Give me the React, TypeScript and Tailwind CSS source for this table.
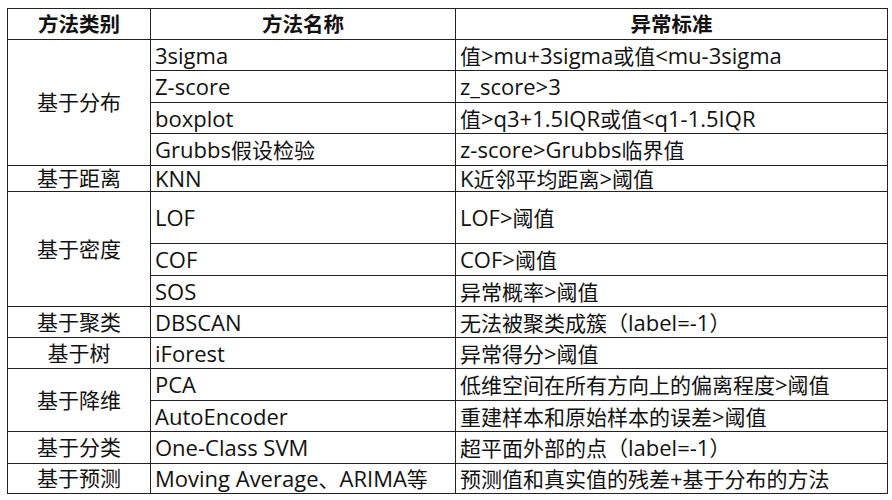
type Group = { category: string; rows: [string, string][] };

const groups: Group[] = [
  {
    category: "基于分布",
    rows: [
      ["3sigma", "值>mu+3sigma或值<mu-3sigma"],
      ["Z-score", "z_score>3"],
      ["boxplot", "值>q3+1.5IQR或值<q1-1.5IQR"],
      ["Grubbs假设检验", "z-score>Grubbs临界值"],
    ],
  },
  { category: "基于距离", rows: [["KNN", "K近邻平均距离>阈值"]] },
  {
    category: "基于密度",
    rows: [
      ["LOF", "LOF>阈值"],
      ["COF", "COF>阈值"],
      ["SOS", "异常概率>阈值"],
    ],
  },
  { category: "基于聚类", rows: [["DBSCAN", "无法被聚类成簇（label=-1）"]] },
  { category: "基于树", rows: [["iForest", "异常得分>阈值"]] },
  {
    category: "基于降维",
    rows: [
      ["PCA", "低维空间在所有方向上的偏离程度>阈值"],
      ["AutoEncoder", "重建样本和原始样本的误差>阈值"],
    ],
  },
  { category: "基于分类", rows: [["One-Class SVM", "超平面外部的点（label=-1）"]] },
  { category: "基于预测", rows: [["Moving Average、ARIMA等", "预测值和真实值的残差+基于分布的方法"]] },
];

const spans: Record<number, string> = {
  1: "row-span-1",
  2: "row-span-2",
  3: "row-span-3",
  4: "row-span-4",
};

const cell = "flex items-center whitespace-pre bg-white leading-none text-[#111]";

// latin runs look a touch bigger than the hanzi in the original
function Mixed({ text }: { text: string }) {
  const parts = text.split(/([\u3000-\u9fff\uff00-\uffef]+)/).filter(Boolean);
  return (
    <span>
      {parts.map((p, i) =>
        /[\u3000-\u9fff\uff00-\uffef]/.test(p) ? (
          <span key={i}>{p}</span>
        ) : (
          <span key={i} className="text-[22px]">
            {p}
          </span>
        )
      )}
    </span>
  );
}

export default function App() {
  return (
    <div className="min-h-[500px] w-[892px] bg-white pl-[7px] pt-[8px] font-['Open_Sans','Noto_Sans_CJK_SC',sans-serif]">
      <div className="grid w-fit grid-cols-[142px_304px_431px] grid-rows-[30px_30px_31px_30px_31px_25px_51px_31px_30px_30px_30px_31px_30px_31px_29px] gap-px bg-[#222] p-px">
        <div className={`${cell} justify-center text-[20.5px] font-bold`}>方法类别</div>
        <div className={`${cell} justify-center text-[20.5px] font-bold`}>方法名称</div>
        <div className={`${cell} justify-center text-[20.5px] font-bold`}>异常标准</div>
        {groups.map((g) => (
          <>
            <div key={g.category} className={`${cell} col-start-1 justify-center text-[21px] ${spans[g.rows.length]}`}>
              {g.category}
            </div>
            {g.rows.map(([name, rule]) => (
              <>
                <div key={name} className={`${cell} col-start-2 pl-[4px] text-[21px]`}>
                  <Mixed text={name} />
                </div>
                <div key={rule} className={`${cell} col-start-3 pl-[4px] text-[21px]`}>
                  <Mixed text={rule} />
                </div>
              </>
            ))}
          </>
        ))}
      </div>
    </div>
  );
}
